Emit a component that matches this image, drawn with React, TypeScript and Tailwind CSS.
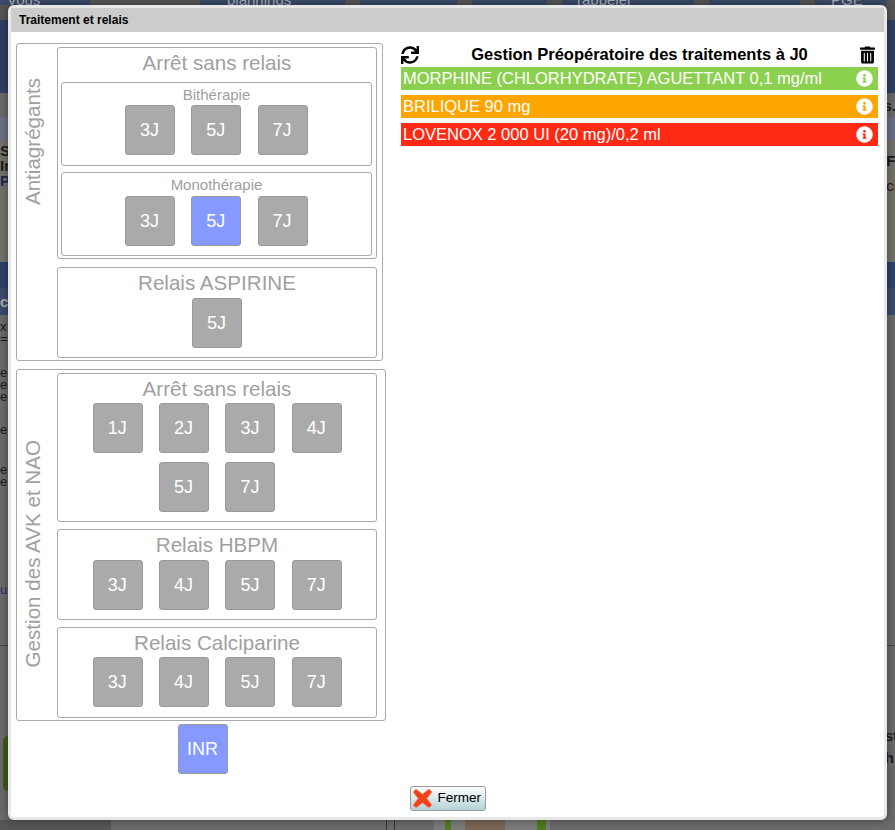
import React from "react";
import { FaSync, FaTrashAlt, FaInfoCircle } from "react-icons/fa";

type JourProps = { label: string; active?: boolean };

// bouton carre gris, bleu quand il est selectionne
const Jour = ({ label, active }: JourProps) => (
  <div
    className={`w-[50px] h-[50px] flex items-center justify-center pr-[1px] rounded-[3px] border border-[#999] text-white text-[18px] ${
      active ? "bg-[#8599ff]" : "bg-[#aaaaaa]"
    }`}
  >
    {label}
  </div>
);

const Jours = ({ items, active, className }: { items: string[]; active?: string; className?: string }) => (
  <div className={`flex flex-wrap justify-center gap-x-[16.33px] gap-y-[9px] ${className ?? ""}`}>
    {items.map((j) => (
      <Jour key={j} label={j} active={j === active} />
    ))}
  </div>
);

const Panel = ({ title, h, children }: { title: string; h: string; children?: React.ReactNode }) => (
  <div className={`w-[320px] rounded-[3px] border border-[#aaa] flex flex-col items-center ${h}`}>
    <div className="text-[20.6px] leading-[29px] text-[#a0a0a0] mb-[1px]">{title}</div>
    {children}
  </div>
);

const SousPanel = ({ title, active, espace }: { title: string; active?: string; espace: string }) => (
  <div className="w-[311px] h-[84px] rounded-[3px] border border-[#aaa] flex flex-col items-center">
    <div className={`text-[15px] leading-[16px] mt-[4px] text-[#a0a0a0] ${espace}`}>{title}</div>
    <Jours items={["3J", "5J", "7J"]} active={active} className="-ml-[0.4px]" />
  </div>
);

const Medicament = ({ nom, bg }: { nom: string; bg: string }) => (
  <div className={`h-[23px] flex items-center justify-between pl-[2px] pr-[5px] text-white text-[16.5px] ${bg}`}>
    <span>{nom}</span>
    <FaInfoCircle className="w-[17px] h-[17px] -mt-[1px]" />
  </div>
);

// la page assombrie derriere la fenetre
const Fond = () => (
  <div className="absolute inset-0 flex flex-col bg-[#6a6a6a] text-[#1a1a1a] text-[15px] font-bold">
    <div className="h-[20px] bg-[#555] overflow-hidden">
      <div className="h-[5px] flex gap-[15px] font-normal text-[15px] leading-[5px] text-[#a9b0bd]">
        <div className="w-[90px] bg-[#3b4a68] pl-[7px] -mt-[3px] h-[8px]">Vous</div>
        <div className="w-[145px] ml-[95px] bg-[#3b4a68] pl-[27px] -mt-[3px] h-[8px]">plannings</div>
        <div className="w-[97px] bg-[#3b4a68]" />
        <div className="w-[75px] bg-[#3b4a68]" />
        <div className="w-[132px] bg-[#3b4a68] pl-[15px] -mt-[3px] h-[8px]">rappeler</div>
        <div className="w-[91px] bg-[#3b4a68]" />
        <div className="w-[72px] bg-[#3b4a68] pl-[16px] -mt-[3px] h-[8px]">PGE</div>
      </div>
    </div>
    <div className="h-[73px] bg-[#2f3f63]" />
    <div className="h-[24px] flex justify-end items-center leading-[16px] pt-[2px]">
      <span className="-mr-[1px]">s.</span>
    </div>
    <div className="h-[23px] bg-[#6b6f85]" />
    <div className="h-[122px] flex justify-between leading-[15px] pt-[3px] bg-[#72716b]">
      <div>S<br />In<br /><span className="text-[#1c2a50]">P</span></div>
      <div className="pt-[5px] -mr-[2px] leading-[25px]">F<br /><span className="font-normal">ci</span></div>
    </div>
    <div className="h-[26px] flex justify-between">
      <div className="w-[8px] bg-[#2f4166]" />
      <div className="w-[8px] bg-[#2f4166]" />
    </div>
    <div className="h-[27px] bg-[#3c4a6a] text-[#aaa] pt-[6px] leading-[16px]">c</div>
    <div className="h-[330px] font-normal text-[13px] leading-[12px] pt-[6px]">
      <div>x</div>
      <div className="mb-[22px]">=</div>
      <div>e<br />e<br />e</div>
      <div className="mt-[21px]">e</div>
      <div className="mt-[28px]">e<br />e</div>
      <div className="mt-[96px] text-[#24305a]">u</div>
    </div>
    <div className="h-[175px] border-t border-[#444] flex justify-between items-start">
      <div className="ml-[3px] w-[5px] h-[55px] rounded-l-full bg-[#3f5a20] mt-[90px]" />
      <div className="font-bold leading-[22px] pt-[79px] -mr-[3px]">st<br />h</div>
    </div>
    <div className="h-[10px] flex">
      <div className="w-[111px] bg-[#555]" />
      <div className="w-[275px]" />
      <div className="w-[9px] border-x border-[#333]" />
      <div className="w-[39px]" />
      <div className="w-[116px] bg-[#7a7a7a] flex">
        <div className="ml-[11px] w-[6px] bg-[#4f7a20]" />
        <div className="ml-[14px] w-[40px] bg-[#7a6555]" />
        <div className="ml-[32px] w-[9px] bg-[#4f7a20]" />
      </div>
    </div>
  </div>
);

export default function App() {
  return (
    <div className="relative w-[895px] h-[830px] overflow-hidden font-['Liberation_Sans',Arial,sans-serif]">
      <Fond />
      <div className="absolute left-[8px] top-[5px] w-[879px] h-[815px] bg-white border-[3px] border-[#e8e8e8] rounded-[6px] flex flex-col shadow-[0_0_8px_rgba(0,0,0,0.4)]">
        <div className="h-[24px] shrink-0 bg-[#cccccc] flex items-center pl-[8px] text-[12px] font-bold text-black">Traitement et relais</div>
        <div className="flex flex-1">
          <div className="w-[390px] pl-[5px] pt-[11px] flex flex-col items-start">
            <div className="w-[367px] h-[318px] rounded-[3px] border border-[#aaa] flex pl-[4px] pt-[3px]">
              <div className="w-[36px] pt-[31px] text-[20.6px] leading-[23px] text-[#a0a0a0]">
                <div className="[writing-mode:vertical-rl] rotate-180">Antiagrégants</div>
              </div>
              <div className="flex flex-col gap-[8px]">
                <Panel title="Arrêt sans relais" h="h-[212px]">
                  <div className="flex flex-col gap-[6px] mt-[4px] -ml-[1px]">
                    <SousPanel title="Bithérapie" espace="mb-[2px]" />
                    <SousPanel title="Monothérapie" active="5J" espace="mb-[3px]" />
                  </div>
                </Panel>
                <Panel title="Relais ASPIRINE" h="h-[91px]">
                  <Jours items={["5J"]} />
                </Panel>
              </div>
            </div>
            <div className="w-[370px] h-[352px] mt-[8px] rounded-[3px] border border-[#aaa] flex pl-[4px] pt-[3px]">
              <div className="w-[36px] pt-[67px] text-[20.6px] leading-[23px] text-[#a0a0a0]">
                <div className="[writing-mode:vertical-rl] rotate-180">Gestion des AVK et NAO</div>
              </div>
              <div className="flex flex-col gap-[7px]">
                <Panel title="Arrêt sans relais" h="h-[149px]">
                  <Jours items={["1J", "2J", "3J", "4J", "5J", "7J"]} className="w-[250px] ml-[0.5px] -mt-[1px]" />
                </Panel>
                <Panel title="Relais HBPM" h="h-[91px]">
                  <Jours items={["3J", "4J", "5J", "7J"]} className="w-[250px] ml-[0.5px]" />
                </Panel>
                <Panel title="Relais Calciparine" h="h-[91px]">
                  <Jours items={["3J", "4J", "5J", "7J"]} className="w-[250px] ml-[0.5px] -mt-[1px]" />
                </Panel>
              </div>
            </div>
            <div className="mt-[3px] ml-[162px]">
              <Jour label="INR" active />
            </div>
          </div>
          <div className="w-[477px] pt-[11px]">
            <div className="h-[24px] flex items-center justify-between pr-[3px] text-[16.5px] font-bold text-black">
              <FaSync className="w-[18px] h-[18px]" />
              <span className="-mt-[1px]">Gestion Préopératoire des traitements à J0</span>
              <FaTrashAlt className="w-[15px] h-[18px]" />
            </div>
            <div className="flex flex-col gap-[5px]">
              <Medicament nom="MORPHINE (CHLORHYDRATE) AGUETTANT 0,1 mg/ml" bg="bg-[#8bd04e]" />
              <Medicament nom="BRILIQUE 90 mg" bg="bg-[#ffa500]" />
              <Medicament nom="LOVENOX 2 000 UI (20 mg)/0,2 ml" bg="bg-[#ff2a14]" />
            </div>
          </div>
        </div>
        <div className="h-[31px] shrink-0 flex justify-center">
          <div className="w-[76px] h-[25px] rounded-[3px] border border-[#999] bg-gradient-to-b from-white to-[#b4d2d6] flex items-center pl-[1px] gap-[5px] text-[13.5px] text-black">
            <svg width="21" height="21" viewBox="0 0 21 21">
              <path d="M4 1 L10.5 6 L17 1 L20 4 L15 10.5 L20 17 L17 20 L10.5 15 L4 20 L1 17 L6 10.5 L1 4 Z" fill="#f0401c" stroke="#e8a080" strokeWidth="1" />
            </svg>
            <span>Fermer</span>
          </div>
        </div>
      </div>
    </div>
  );
}
